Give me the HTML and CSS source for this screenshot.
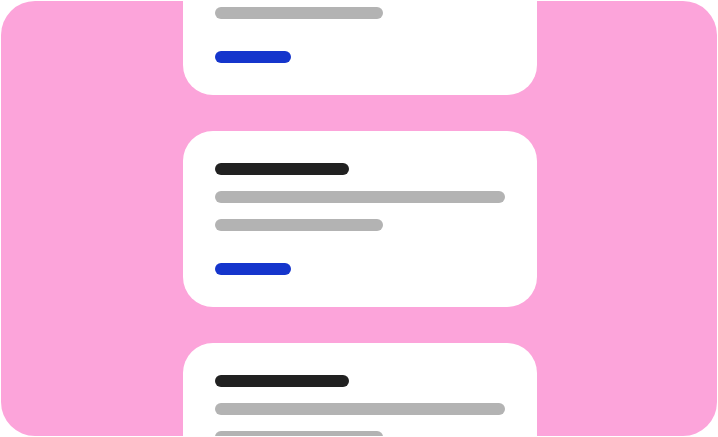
FILE: index.html
```html
<!DOCTYPE html>
<html>
<head>
<meta charset="utf-8">
<link rel="stylesheet" href="styles.css">
</head>
<body>
<div class="frame">
  <div class="stack">
    <div class="card">
      <div class="bar bar-title"></div>
      <div class="bar bar-line"></div>
      <div class="bar bar-short"></div>
      <div class="bar bar-link"></div>
    </div>
    <div class="card">
      <div class="bar bar-title"></div>
      <div class="bar bar-line"></div>
      <div class="bar bar-short"></div>
      <div class="bar bar-link"></div>
    </div>
    <div class="card">
      <div class="bar bar-title"></div>
      <div class="bar bar-line"></div>
      <div class="bar bar-short"></div>
      <div class="bar bar-link"></div>
    </div>
  </div>
</div>
</body>
</html>
```
FILE: styles.css
```css
html, body {
  margin: 0;
  padding: 0;
  background: #ffffff;
  width: 718px;
  height: 437px;
  overflow: hidden;
}
.frame {
  margin: 1px 0 0 1px;
  width: 716px;
  height: 435px;
  background: #fca4da;
  border-radius: 34px;
  overflow: hidden;
}
.stack {
  display: flex;
  flex-direction: column;
  gap: 36px;
  padding-left: 182px;
  margin-top: -82px;
}
.card {
  width: 354px;
  height: 176px;
  box-sizing: border-box;
  background: #ffffff;
  border-radius: 30px;
  padding: 32px;
  display: flex;
  flex-direction: column;
  align-items: flex-start;
}
.bar {
  height: 12px;
  border-radius: 6px;
  flex: none;
}
.bar-title {
  width: 134px;
  background: #212121;
}
.bar-line {
  width: 290px;
  background: #b3b3b3;
  margin-top: 16px;
}
.bar-short {
  width: 168px;
  background: #b3b3b3;
  margin-top: 16px;
}
.bar-link {
  width: 76px;
  background: #1535cc;
  margin-top: 32px;
}
```
